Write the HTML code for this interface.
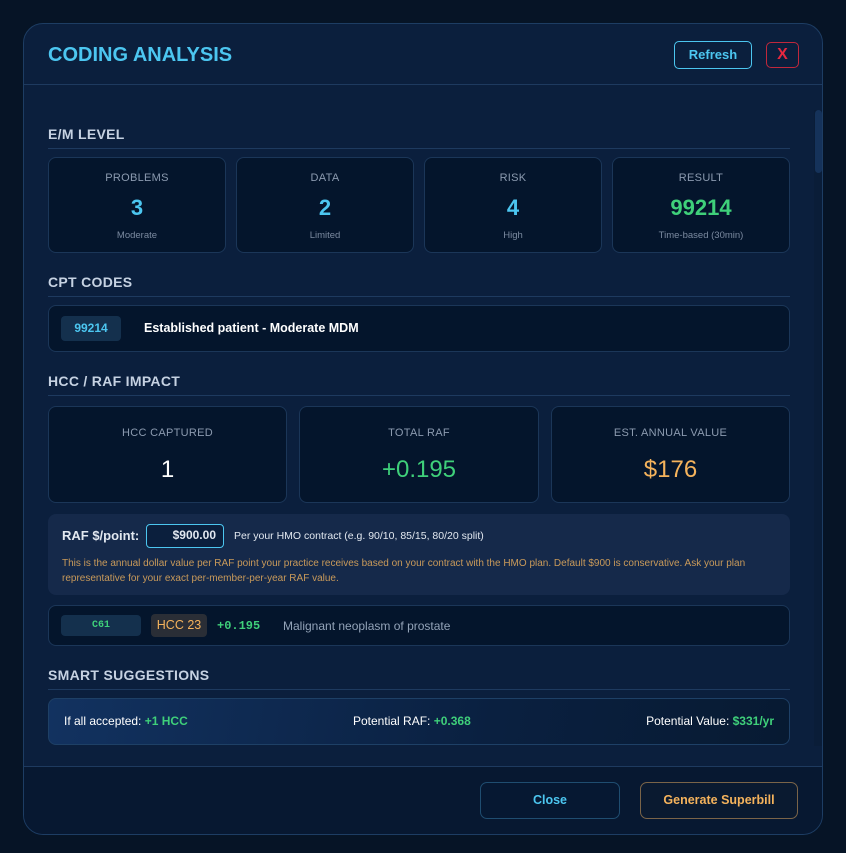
<!DOCTYPE html>
<html><head><meta charset="utf-8"><style>
*{box-sizing:border-box;margin:0;padding:0}
body{width:846px;height:853px;background:#061426;font-family:"Liberation Sans",sans-serif;position:relative;overflow:hidden}
.a{position:absolute}
.modal{left:23px;top:23px;width:800px;height:812px;background:#0b1f3d;border:1px solid #1d3d63;border-radius:20px;overflow:hidden}
.sec{position:absolute;left:48px;width:742px;font-size:14px;font-weight:bold;color:#c6d2e2;letter-spacing:0.3px}
.line{position:absolute;left:48px;width:742px;height:1px;background:#1e3a5f}
.card{position:absolute;background:#04152c;border:1px solid #1b3658;border-radius:8px;text-align:center}
.lab{font-size:11px;color:#8c9bb0;letter-spacing:0.3px}
.big{font-weight:bold;font-size:22px}
.sub{font-size:9.5px;color:#7b8aa0}
</style></head><body>
<div class="a modal">
 <div class="a" style="left:0;top:60px;width:800px;height:1px;background:#1e3a5f"></div>
 <div class="a" style="left:24px;top:20px;font-size:20px;font-weight:bold;color:#4cc6f0">CODING ANALYSIS</div>
 <div class="a" style="left:650px;top:17px;width:78px;height:28px;border:1.5px solid #4cc6f0;border-radius:5px;color:#4cc6f0;font-weight:bold;font-size:13px;text-align:center;line-height:25px">Refresh</div>
 <div class="a" style="left:742px;top:18px;width:33px;height:26px;border:1.5px solid #c0283c;border-radius:5px;color:#e5283f;font-weight:bold;font-size:16px;text-align:center;line-height:23px">X</div>
 <div class="a" style="left:0;top:742px;width:800px;height:70px;background:#071831;border-top:1px solid #1e3a5f"></div>
 <div class="a" style="left:790px;top:86px;width:8px;height:636px;background:#0a1d38"></div>
 <div class="a" style="left:791px;top:86px;width:7px;height:63px;background:#15325a;border-radius:4px"></div>
</div>

<div class="sec" style="top:126px">E/M LEVEL</div><div class="line" style="top:148px"></div>
<div class="card" style="left:48px;top:157px;width:178px;height:96px"><div class="lab" style="margin-top:14px">PROBLEMS</div><div class="big" style="color:#4cc6f0;margin-top:11px">3</div><div class="sub" style="margin-top:9px">Moderate</div></div>
<div class="card" style="left:236px;top:157px;width:178px;height:96px"><div class="lab" style="margin-top:14px">DATA</div><div class="big" style="color:#4cc6f0;margin-top:11px">2</div><div class="sub" style="margin-top:9px">Limited</div></div>
<div class="card" style="left:424px;top:157px;width:178px;height:96px"><div class="lab" style="margin-top:14px">RISK</div><div class="big" style="color:#4cc6f0;margin-top:11px">4</div><div class="sub" style="margin-top:9px">High</div></div>
<div class="card" style="left:612px;top:157px;width:178px;height:96px"><div class="lab" style="margin-top:14px">RESULT</div><div class="big" style="color:#3fd07a;margin-top:11px">99214</div><div class="sub" style="margin-top:9px">Time-based (30min)</div></div>

<div class="sec" style="top:274px">CPT CODES</div><div class="line" style="top:296px"></div>
<div class="card" style="left:48px;top:305px;width:742px;height:47px;text-align:left">
 <div class="a" style="left:12px;top:10px;width:60px;height:25px;background:#14304d;border-radius:4px;color:#4cc6f0;font-size:12px;font-weight:bold;text-align:center;line-height:25px">99214</div>
 <div class="a" style="left:95px;top:15px;color:#fff;font-size:12.5px;font-weight:bold">Established patient - Moderate MDM</div>
</div>

<div class="sec" style="top:373px">HCC / RAF IMPACT</div><div class="line" style="top:395px"></div>
<div class="card" style="left:48px;top:406px;width:239px;height:97px"><div class="lab" style="margin-top:20px">HCC CAPTURED</div><div class="big" style="color:#fff;margin-top:17px;font-weight:normal;font-size:24px">1</div></div>
<div class="card" style="left:299px;top:406px;width:240px;height:97px"><div class="lab" style="margin-top:20px">TOTAL RAF</div><div class="big" style="color:#3fd07a;margin-top:17px;font-weight:normal;font-size:24px">+0.195</div></div>
<div class="card" style="left:551px;top:406px;width:239px;height:97px"><div class="lab" style="margin-top:20px">EST. ANNUAL VALUE</div><div class="big" style="color:#f5b35c;margin-top:17px;font-weight:normal;font-size:24px">$176</div></div>

<div class="a" style="left:48px;top:514px;width:742px;height:81px;background:#15294a;border-radius:8px">
 <div class="a" style="left:14px;top:14px;color:#e2e8f0;font-weight:bold;font-size:13px">RAF $/point:</div>
 <div class="a" style="left:98px;top:10px;width:78px;height:24px;border:1.5px solid #4cc6f0;border-radius:4px;background:#0b1f3d;color:#e2e8f0;font-weight:bold;font-size:12px;text-align:right;padding-right:7px;line-height:21px">$900.00</div>
 <div class="a" style="left:186px;top:16px;color:#e2e8f0;font-size:10.5px">Per your HMO contract (e.g. 90/10, 85/15, 80/20 split)</div>
 <div class="a" style="left:14px;top:42px;width:720px;color:#c99a5a;font-size:10px;line-height:15px">This is the annual dollar value per RAF point your practice receives based on your contract with the HMO plan. Default $900 is conservative. Ask your plan representative for your exact per-member-per-year RAF value.</div>
</div>

<div class="card" style="left:48px;top:605px;width:742px;height:41px;text-align:left">
 <div class="a" style="left:12px;top:9px;width:80px;height:21px;background:#14304d;border-radius:4px;color:#3fd07a;font-size:10px;font-family:'Liberation Mono',monospace;font-weight:bold;text-align:center;line-height:21px">C61</div>
 <div class="a" style="left:102px;top:8px;width:56px;height:23px;background:#2a2e36;border-radius:4px;color:#f5b35c;font-size:12.5px;text-align:center;line-height:23px">HCC 23</div>
 <div class="a" style="left:168px;top:13px;color:#3fd07a;font-size:12px;font-family:'Liberation Mono',monospace;font-weight:bold">+0.195</div>
 <div class="a" style="left:234px;top:13px;color:#93a3b8;font-size:12px">Malignant neoplasm of prostate</div>
</div>

<div class="sec" style="top:667px">SMART SUGGESTIONS</div><div class="line" style="top:689px"></div>
<div class="a" style="left:48px;top:698px;width:742px;height:47px;border:1px solid #1e4066;border-radius:8px;background:linear-gradient(100deg,#123260,#0a2040 60%,#071a32)">
 <div class="a" style="left:15px;top:15px;color:#fff;font-size:12px">If all accepted: <b style="color:#3fd07a">+1 HCC</b></div>
 <div class="a" style="left:304px;top:15px;color:#fff;font-size:12px">Potential RAF: <b style="color:#3fd07a">+0.368</b></div>
 <div class="a" style="right:15px;top:15px;color:#fff;font-size:12px">Potential Value: <b style="color:#3fd07a">$331/yr</b></div>
</div>

<div class="a" style="left:480px;top:782px;width:140px;height:37px;border:1px solid #1f4d70;border-radius:7px;background:#061832;color:#4cc6f0;font-weight:bold;font-size:12.5px;text-align:center;line-height:35px">Close</div>
<div class="a" style="left:640px;top:782px;width:158px;height:37px;border:1px solid #7a6448;border-radius:7px;background:#0a1a30;color:#f5b35c;font-weight:bold;font-size:12.5px;text-align:center;line-height:35px">Generate Superbill</div>
</body></html>
